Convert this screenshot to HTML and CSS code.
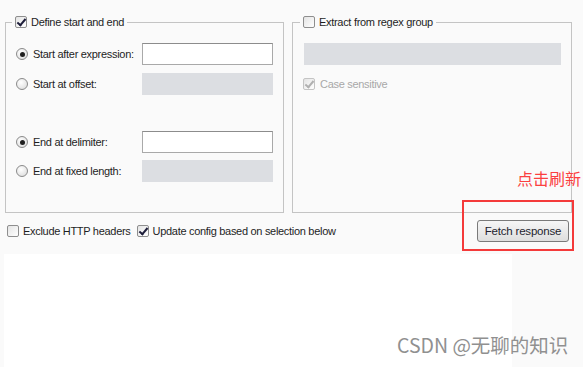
FILE: index.html
```html
<!DOCTYPE html>
<html lang="en">
<head>
  <meta charset="UTF-8">
  <title>Extract grep item</title>
  <link rel="stylesheet" href="styles.css">
</head>
<body>
  <div class="panes">
    <!-- Left: start / end -->
    <fieldset class="group">
      <legend><span class="check on"></span>Define start and end</legend>
      <div class="row">
        <span class="opt"><span class="radio on"></span>Start after expression:</span>
        <span class="field"></span>
      </div>
      <div class="row">
        <span class="opt"><span class="radio"></span>Start at offset:</span>
        <span class="field off"></span>
      </div>
      <div class="row spaced">
        <span class="opt"><span class="radio on"></span>End at delimiter:</span>
        <span class="field"></span>
      </div>
      <div class="row tight">
        <span class="opt"><span class="radio"></span>End at fixed length:</span>
        <span class="field off"></span>
      </div>
    </fieldset>
    <!-- Right: regex group -->
    <fieldset class="group right">
      <legend><span class="check"></span>Extract from regex group</legend>
      <div class="row">
        <span class="field off wide"></span>
      </div>
      <div class="row small muted">
        <span class="check on dim"></span>Case sensitive
      </div>
    </fieldset>
  </div>

  <div class="toolbar">
    <span class="opt"><span class="check"></span>Exclude HTTP headers</span>
    <span class="opt"><span class="check on"></span>Update config based on selection below</span>
    <button class="btn">Fetch response</button>
    <span class="note">点击刷新</span>
    <span class="mark"></span>
  </div>

  <div class="response"></div>
  <div class="watermark">CSDN @无聊的知识</div>
</body>
</html>
```

FILE: styles.css
```css
body {
  margin: 0;
  background: #fafafa;
  font-family: "Liberation Sans", Arial, sans-serif;
  font-size: 11px;
  letter-spacing: -0.3px;
  color: #1e1e1e;
  height: 367px;
  overflow: hidden;
  position: relative;
}
.panes {
  display: grid;
  grid-template-columns: 279px 280px;
  gap: 8px;
  padding: 15px 0 0 5px;
}
.group {
  margin: 0;
  padding: 14px 10px 22px 10px;
  border: 1px solid #c4c4c4;
  min-width: 0;
}
.group legend {
  margin-left: -4px;
  padding: 0 3px;
  height: 14px;
  display: flex;
  align-items: center;
}
.group.right {
  padding-left: 11px;
  padding-right: 10px;
}
.row {
  display: flex;
  align-items: center;
  height: 22px;
  margin-bottom: 8px;
}
.row.spaced {
  margin-top: 36px;
}
.row.tight {
  margin-top: -1px;
}
.row.small {
  height: 14px;
  margin-top: 12px;
}
.muted {
  color: #a8a8a8;
}
.opt {
  flex: 1;
  display: flex;
  align-items: center;
}
.field {
  width: 131px;
  height: 22px;
  box-sizing: border-box;
  background: #fff;
  border: 1px solid #a9a9a9;
  border-top-color: #8c8c8c;
}
.field.off {
  background: #dcdee2;
  border-color: #dcdee2;
}
.field.wide {
  width: 257px;
}
.radio {
  width: 12px;
  height: 12px;
  box-sizing: border-box;
  border-radius: 50%;
  border: 1px solid #8a8a8a;
  background: radial-gradient(circle at 40% 35%, #fff, #d8d8d8);
  margin-right: 5px;
  position: relative;
}
.radio.on::after {
  content: "";
  position: absolute;
  left: 2.5px;
  top: 2.5px;
  width: 5px;
  height: 5px;
  border-radius: 50%;
  background: #1f1f1f;
}
.check {
  width: 12px;
  height: 12px;
  box-sizing: border-box;
  border: 1px solid #8e8e8e;
  border-radius: 2px;
  background: linear-gradient(135deg, #e4e4e4, #fff);
  margin-right: 4px;
  position: relative;
}
.check.on::after {
  content: "";
  position: absolute;
  left: 3px;
  top: 0px;
  width: 3px;
  height: 7px;
  border: solid #1d1d3a;
  border-width: 0 2px 2px 0;
  transform: rotate(40deg);
}
.check.dim {
  border-color: #c4c4c4;
  margin-left: -1px;
  margin-right: 5px;
}
.check.dim::after {
  border-color: #b0b0b0;
}
.toolbar {
  display: flex;
  align-items: center;
  gap: 6px;
  height: 22px;
  margin-top: 7px;
  padding: 0 14px 0 7px;
  position: relative;
}
.toolbar .opt {
  flex: none;
}
.btn {
  margin-left: auto;
  width: 92px;
  height: 22px;
  font: inherit;
  font-size: 11.5px;
  letter-spacing: -0.2px;
  color: #1e1e2e;
  border: 1px solid #7a7a7a;
  border-radius: 3px;
  background: linear-gradient(#f6f6f6, #dedede);
  padding: 0;
}
.note {
  position: absolute;
  left: 517px;
  top: -54px;
  font-family: "Noto Sans CJK SC", sans-serif;
  font-size: 16px;
  letter-spacing: 0;
  color: #fb4040;
  white-space: nowrap;
}
.mark {
  position: absolute;
  left: 462px;
  top: -20px;
  width: 108px;
  height: 47px;
  border: 2px solid #f43a3a;
}
.response {
  margin: 12px 0 0 4px;
  width: 508px;
  height: 120px;
  background: #fff;
}
.watermark {
  position: absolute;
  left: 397px;
  top: 330px;
  font-family: "Noto Sans CJK SC", sans-serif;
  font-size: 19.5px;
  letter-spacing: 0;
  color: #909090;
}
```
